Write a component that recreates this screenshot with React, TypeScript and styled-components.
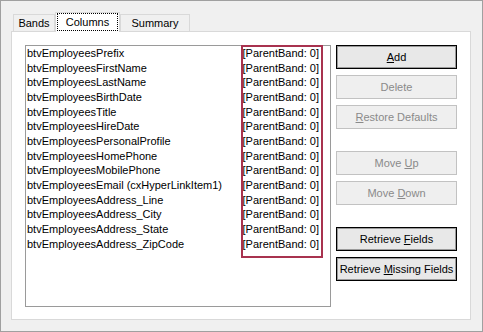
import React from 'react';
import styled, { createGlobalStyle } from 'styled-components';

const GlobalStyle = createGlobalStyle`
  body {
    margin: 0;
    font-family: "Liberation Sans", Arial, sans-serif;
    font-size: 11px;
    color: #000;
  }
`;

const Window = styled.div`
  width: 483px;
  height: 332px;
  box-sizing: border-box;
  border: 1px solid #a0a0a0;
  background: #f0f0f0;
  padding: 11px 0 0 10px;
`;

const TabStrip = styled.div`
  display: flex;
  align-items: flex-end;
  height: 19px;
  padding-left: 2px;
`;

const Tab = styled.div<{ $w: number; $active?: boolean }>`
  position: relative;
  z-index: ${p => (p.$active ? 1 : 0)};
  box-sizing: border-box;
  width: ${p => p.$w}px;
  height: ${p => (p.$active ? 20 : 17)}px;
  margin-bottom: ${p => (p.$active ? -1 : 0)}px;
  border: 1px solid #d9d9d9;
  border-bottom: none;
  background: ${p => (p.$active ? '#fff' : '#f0f0f0')};
  display: flex;
  align-items: center;
  justify-content: center;
  padding: ${p => (p.$active ? '0 1px 1px' : '1px 0 0')};
  line-height: 13px;
`;

const FocusRect = styled.div`
  flex: 1;
  align-self: stretch;
  display: flex;
  align-items: center;
  justify-content: center;
  border: 1px dotted #000;
`;

const Panel = styled.div`
  width: 460px;
  height: 289px;
  box-sizing: border-box;
  border: 1px solid #d9d9d9;
  background: #fff;
  padding: 13px;
  display: flex;
  gap: 5px;
`;

const ListBox = styled.div`
  position: relative;
  width: 308px;
  height: 262px;
  box-sizing: border-box;
  border: 1px solid #9a9a9a;
  background: #fff;
`;

const Row = styled.div`
  display: flex;
  justify-content: space-between;
  height: 14.67px;
  line-height: 14.67px;
  padding: 0 11px 0 1px;
  white-space: nowrap;
`;

const Highlight = styled.div`
  position: absolute;
  left: 215px;
  top: -1px;
  width: 82px;
  height: 213px;
  box-sizing: border-box;
  border: 2px solid #a8324f;
  pointer-events: none;
`;

const ButtonColumn = styled.div`
  display: flex;
  flex-direction: column;
  gap: 6px;
`;

const Button = styled.div<{ $disabled?: boolean; $gapBefore?: boolean }>`
  width: 121px;
  height: 24px;
  box-sizing: border-box;
  margin-top: ${p => (p.$gapBefore ? 16 : 0)}px;
  display: flex;
  align-items: center;
  justify-content: center;
  background: ${p => (p.$disabled ? '#efefef' : '#e8e8e8')};
  border: 1px solid ${p => (p.$disabled ? '#c2c2c2' : '#000')};
  box-shadow: ${p => (p.$disabled ? 'none' : 'inset 0 0 0 1px #9a9a9a')};
  color: ${p => (p.$disabled ? '#8a8a8a' : '#000')};
`;

const Label = styled.span`
  white-space: pre;
`;

const U = styled.span`
  text-decoration: underline;
`;

const fields = [
  'btvEmployeesPrefix',
  'btvEmployeesFirstName',
  'btvEmployeesLastName',
  'btvEmployeesBirthDate',
  'btvEmployeesTitle',
  'btvEmployeesHireDate',
  'btvEmployeesPersonalProfile',
  'btvEmployeesHomePhone',
  'btvEmployeesMobilePhone',
  'btvEmployeesEmail (cxHyperLinkItem1)',
  'btvEmployeesAddress_Line',
  'btvEmployeesAddress_City',
  'btvEmployeesAddress_State',
  'btvEmployeesAddress_ZipCode',
];

const App: React.FC = () => {
  return (
    <>
      <GlobalStyle />
      <Window>
        <TabStrip>
          <Tab $w={42}>Bands</Tab>
          <Tab $w={65} $active>
            <FocusRect>Columns</FocusRect>
          </Tab>
          <Tab $w={70}>Summary</Tab>
        </TabStrip>
        <Panel>
          <ListBox>
            {fields.map(f => (
              <Row key={f}>
                <span>{f}</span>
                <span>[ParentBand: 0]</span>
              </Row>
            ))}
            <Highlight />
          </ListBox>
          <ButtonColumn>
            <Button><Label><U>A</U>dd</Label></Button>
            <Button $disabled><Label>Delete</Label></Button>
            <Button $disabled><Label><U>R</U>estore Defaults</Label></Button>
            <Button $disabled $gapBefore><Label>Move <U>U</U>p</Label></Button>
            <Button $disabled><Label>Move <U>D</U>own</Label></Button>
            <Button $gapBefore><Label>Retrieve <U>F</U>ields</Label></Button>
            <Button><Label>Retrieve <U>M</U>issing Fields</Label></Button>
          </ButtonColumn>
        </Panel>
      </Window>
    </>
  );
};

export default App;
